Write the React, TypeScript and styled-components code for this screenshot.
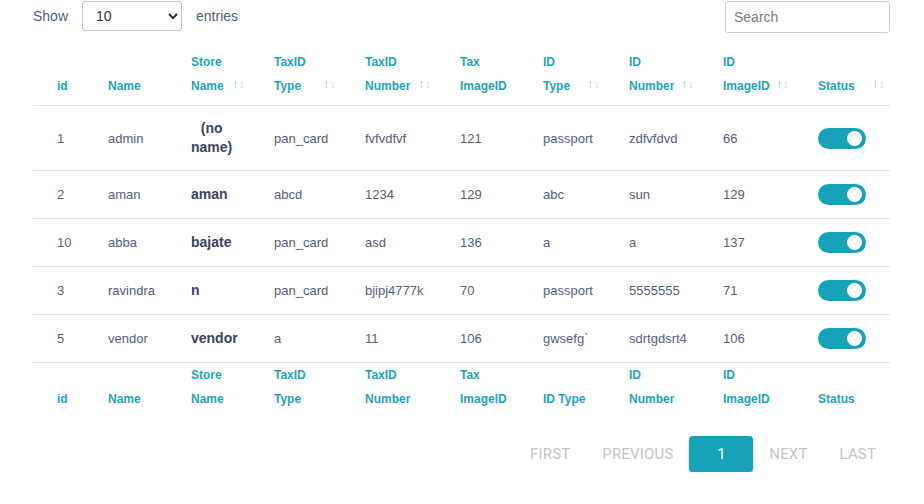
import { VFC } from "react"
import styled, { createGlobalStyle } from "styled-components"

type Column = { label: string[]; footer: string[]; sortable: boolean; width: number }

const columns: Column[] = [
  { label: ["id"], footer: ["id"], sortable: false, width: 51 },
  { label: ["Name"], footer: ["Name"], sortable: false, width: 83 },
  { label: ["Store", "Name"], footer: ["Store", "Name"], sortable: true, width: 83 },
  { label: ["TaxID", "Type"], footer: ["TaxID", "Type"], sortable: true, width: 91 },
  { label: ["TaxID", "Number"], footer: ["TaxID", "Number"], sortable: true, width: 95 },
  { label: ["Tax", "ImageID"], footer: ["Tax", "ImageID"], sortable: false, width: 83 },
  { label: ["ID", "Type"], footer: ["ID Type"], sortable: true, width: 86 },
  { label: ["ID", "Number"], footer: ["ID", "Number"], sortable: true, width: 94 },
  { label: ["ID", "ImageID"], footer: ["ID", "ImageID"], sortable: true, width: 95 },
  { label: ["Status"], footer: ["Status"], sortable: true, width: 96 },
]

const rows = [
  { id: "1", name: "admin", store: "(no\nname)", taxType: "pan_card", taxNumber: "fvfvdfvf", taxImage: "121", idType: "passport", idNumber: "zdfvfdvd", idImage: "66" },
  { id: "2", name: "aman", store: "aman", taxType: "abcd", taxNumber: "1234", taxImage: "129", idType: "abc", idNumber: "sun", idImage: "129" },
  { id: "10", name: "abba", store: "bajate", taxType: "pan_card", taxNumber: "asd", taxImage: "136", idType: "a", idNumber: "a", idImage: "137" },
  { id: "3", name: "ravindra", store: "n", taxType: "pan_card", taxNumber: "bjipj4777k", taxImage: "70", idType: "passport", idNumber: "5555555", idImage: "71" },
  { id: "5", name: "vendor", store: "vendor", taxType: "a", taxNumber: "11", taxImage: "106", idType: "gwsefg`", idNumber: "sdrtgdsrt4", idImage: "106" },
]

const GlobalStyle = createGlobalStyle`
  body {
    margin: 0;
    background: #fff;
    font-family: "Liberation Sans", Arial, sans-serif;
  }
`

const HeaderLabel: VFC<{ lines: string[] }> = ({ lines }) => (
  <span>
    {lines.map((line, i) => (
      <span key={i}>
        {i > 0 && <br />}
        {line}
      </span>
    ))}
  </span>
)

export default function App() {
  return (
    <Root>
      <GlobalStyle />
      <TopBar>
        <LengthControl>
          Show
          <LengthSelect defaultValue="10">
            <option value="10">10</option>
            <option value="25">25</option>
            <option value="50">50</option>
          </LengthSelect>
          entries
        </LengthControl>
        <SearchInput placeholder="Search" />
      </TopBar>

      <Table>
        <colgroup>
          {columns.map((c, i) => (
            <col key={i} style={{ width: c.width }} />
          ))}
        </colgroup>
        <thead>
          <tr>
            {columns.map((c, i) => (
              <HeadCell key={i}>
                <HeadInner>
                  <HeaderLabel lines={c.label} />
                  {c.sortable && (
                    <SortIcon>
                      <SortUp>↑</SortUp>
                      <SortDown>↓</SortDown>
                    </SortIcon>
                  )}
                </HeadInner>
              </HeadCell>
            ))}
          </tr>
        </thead>
        <tbody>
          {rows.map((r, i) => (
            <BodyRow key={i}>
              <Cell>{r.id}</Cell>
              <Cell>{r.name}</Cell>
              <Cell>
                <StoreName>{r.store}</StoreName>
              </Cell>
              <Cell>{r.taxType}</Cell>
              <Cell>{r.taxNumber}</Cell>
              <Cell>{r.taxImage}</Cell>
              <Cell>{r.idType}</Cell>
              <Cell>{r.idNumber}</Cell>
              <Cell>{r.idImage}</Cell>
              <Cell>
                <Toggle>
                  <Knob />
                </Toggle>
              </Cell>
            </BodyRow>
          ))}
        </tbody>
        <tfoot>
          <tr>
            {columns.map((c, i) => (
              <FootCell key={i}>
                <HeaderLabel lines={c.footer} />
              </FootCell>
            ))}
          </tr>
        </tfoot>
      </Table>

      <Pagination>
        <PageLink>FIRST</PageLink>
        <PageLink>PREVIOUS</PageLink>
        <PageButton>1</PageButton>
        <PageLink>NEXT</PageLink>
        <PageLink>LAST</PageLink>
      </Pagination>
    </Root>
  )
}

const Root = styled.div`
  width: 857px;
  padding: 1px 34px 0 33px;
  color: #525f7f;
`

const TopBar = styled.div`
  display: flex;
  justify-content: space-between;
  align-items: flex-start;
  height: 33px;
`

const LengthControl = styled.label`
  display: flex;
  align-items: center;
  gap: 14px;
  font-size: 14px;
  color: #525f7f;
  height: 30px;
`

const LengthSelect = styled.select`
  width: 100px;
  height: 30px;
  padding: 0 8px 0 9px;
  border: 1px solid #c8c8c8;
  border-radius: 3px;
  background: #fff;
  font-family: "Liberation Sans", Arial, sans-serif;
  font-size: 14px;
  color: #333;
`

const SearchInput = styled.input.attrs({ type: "text" })`
  box-sizing: border-box;
  width: 165px;
  height: 32px;
  padding: 0 8px;
  border: 1px solid #cfcfcf;
  border-radius: 3px;
  font-family: "Liberation Sans", Arial, sans-serif;
  font-size: 14px;
  color: #333;
  outline: none;

  &::placeholder {
    color: #7d7d7d;
  }
`

const Table = styled.table`
  width: 857px;
  margin-top: 8px;
  border-collapse: collapse;
  table-layout: fixed;
`

const HeadCell = styled.th`
  padding: 8px 5px 7px 24px;
  vertical-align: bottom;
  text-align: left;
  font-size: 12px;
  font-weight: bold;
  line-height: 24px;
  color: #1ea4c0;
`

const HeadInner = styled.div`
  display: flex;
  justify-content: space-between;
  align-items: flex-end;
`

const SortIcon = styled.span`
  display: flex;
  font-size: 13px;
  font-weight: normal;
  line-height: 22px;
  padding-bottom: 3px;
`

const SortUp = styled.span`
  color: #7fcbdc;
`

const SortDown = styled.span`
  color: #b7e0ea;
`

const BodyRow = styled.tr`
  border-top: 1px solid #e3e3e3;
`

const Cell = styled.td`
  padding: 13px 6px 13px 24px;
  vertical-align: middle;
  font-size: 13px;
  line-height: 19px;
  color: #525f7f;
`

const StoreName = styled.span`
  display: inline-block;
  font-size: 14px;
  font-weight: bold;
  line-height: 19px;
  color: #3a4560;
  text-align: center;
  white-space: pre-line;
`

const Toggle = styled.span`
  display: flex;
  justify-content: flex-end;
  align-items: center;
  box-sizing: border-box;
  width: 48px;
  height: 21px;
  padding-right: 4px;
  border-radius: 11px;
  background: #17a2b8;
`

const Knob = styled.span`
  width: 15px;
  height: 15px;
  border-radius: 50%;
  background: #fff;
`

const FootCell = styled.th`
  padding: 0 6px 8px 24px;
  vertical-align: bottom;
  text-align: left;
  font-size: 12px;
  font-weight: bold;
  line-height: 24px;
  color: #1ea4c0;
  border-top: 1px solid #e3e3e3;
`

const Pagination = styled.div`
  display: flex;
  justify-content: flex-end;
  margin: 17px -2px 0 0;
`

const PageLink = styled.span`
  display: flex;
  align-items: center;
  height: 36px;
  padding: 0 16px;
  font-family: Roboto, "Liberation Sans", sans-serif;
  font-size: 15px;
  color: #c4c4c4;
  letter-spacing: 0.15px;
`

const PageButton = styled.span`
  display: flex;
  align-items: center;
  justify-content: center;
  width: 64px;
  height: 36px;
  border-radius: 4px;
  background: #17a2b8;
  color: #fff;
  font-family: Roboto, "Liberation Sans", sans-serif;
  font-size: 15px;
  box-shadow: 0 2px 2px rgba(0, 0, 0, 0.2), 0 1px 4px rgba(0, 0, 0, 0.12);
`
